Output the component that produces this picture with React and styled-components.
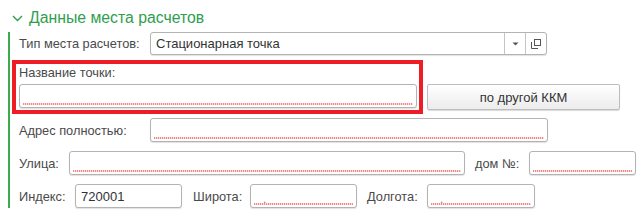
import React from 'react'
import styled, { createGlobalStyle } from 'styled-components'

const GlobalStyle = createGlobalStyle`
    body {
        margin: 0;
        background: #fff;
        font-family: "Liberation Sans", Arial, sans-serif;
    }
`

const Page = styled.div`
    width: 640px;
    height: 221px;
    overflow: hidden;
    background: #fff;
`

const Header = styled.div`
    display: flex;
    align-items: center;
    box-sizing: border-box;
    height: 32px;
    padding: 3px 0 0 12px;
    color: #2f9e4f;
    font-size: 15.8px;

    svg {
        margin-right: 6px;
        margin-top: 1px;
    }
`

const Group = styled.div`
    margin-left: 8px;
    border-left: 2px solid #3daa4f;
    padding-left: 9px;
    display: flex;
    flex-direction: column;
`

const Row = styled.div`
    display: flex;
    align-items: center;
    margin-top: ${p => p.$gap || 0}px;
`

const Label = styled.div`
    width: ${p => p.$w}px;
    margin-left: ${p => p.$ml || 0}px;
    flex-shrink: 0;
    font-size: 12.8px;
    color: #4a4a4a;
    white-space: nowrap;
`

const Field = styled.div`
    position: relative;
    box-sizing: border-box;
    width: ${p => p.$w}px;
    height: ${p => p.$h || 24}px;
    border: 1px solid #b3b3b3;
    border-radius: 3px;
    box-shadow: 0 1px 1px rgba(0, 0, 0, 0.12);
    background: #fff;
    display: flex;
    align-items: center;
    padding-left: 5px;
    font-size: 13px;
    color: #333;
    flex-shrink: 0;

    ${p => p.$required && `
        &::after {
            content: '';
            position: absolute;
            left: 3px;
            right: 3px;
            bottom: 2px;
            height: 2px;
            background: repeating-linear-gradient(90deg, #f38a8a 0 1px, #fddada 1px 2px);
        }
    `}
`

const FieldText = styled.span`
    flex: 1;
`

const Dot = styled.span`
    flex: 1;
    padding-left: 7px;
    padding-top: 6px;
    color: #8a8a8a;
    font-size: 12px;
`

const FieldButton = styled.div`
    width: 20px;
    align-self: stretch;
    border-left: 1px solid #c4c4c4;
    display: flex;
    align-items: center;
    justify-content: center;
`

const Highlight = styled.div`
    margin-left: -7px;
    margin-top: 5px;
    border: 4px solid #ee1c25;
    padding: 0 2px 2px 3px;
    width: 398px;
`

const HighlightLabel = styled(Label)`
    height: 20px;
    line-height: 18px;
`

const NameRow = styled.div`
    display: flex;
    align-items: flex-end;
`

const Button = styled.div`
    box-sizing: border-box;
    margin-left: 4px;
    margin-bottom: 4px;
    width: 193px;
    height: 26px;
    border: 1px solid #bdbdbd;
    border-radius: 2px;
    background: linear-gradient(#ffffff, #ececec);
    box-shadow: 0 1px 1px rgba(0, 0, 0, 0.15);
    display: flex;
    align-items: center;
    justify-content: center;
    font-size: 13px;
    color: #333;
`

const Chevron = () => (
    <svg width="11" height="7" viewBox="0 0 11 7">
        <path d="M1 1l4.5 4.5L10 1" fill="none" stroke="#2f9e4f" strokeWidth="1.4" />
    </svg>
)

const DropIcon = () => (
    <svg width="7" height="4" viewBox="0 0 7 4">
        <path d="M0.5 0.5h6L3.5 3.5z" fill="#555" />
    </svg>
)

const CopyIcon = () => (
    <svg width="10" height="10" viewBox="0 0 10 10">
        <rect x="3.5" y="0.5" width="6" height="6" fill="none" stroke="#555" />
        <path d="M0.5 3v6.5H7" fill="none" stroke="#555" />
    </svg>
)

const App = () => {
    return (
        <Page>
            <GlobalStyle />
            <Header>
                <Chevron />
                Данные места расчетов
            </Header>
            <Group>
                <Row>
                    <Label $w={131}>Тип места расчетов:</Label>
                    <Field $w={397} $h={23}>
                        <FieldText>Стационарная точка</FieldText>
                        <FieldButton><DropIcon /></FieldButton>
                        <FieldButton><CopyIcon /></FieldButton>
                    </Field>
                </Row>
                <NameRow>
                    <Highlight>
                        <HighlightLabel>Название точки:</HighlightLabel>
                        <Field $w={398} $required />
                    </Highlight>
                    <Button>по другой ККМ</Button>
                </NameRow>
                <Row $gap={4}>
                    <Label $w={131}>Адрес полностью:</Label>
                    <Field $w={398} $required />
                </Row>
                <Row $gap={9}>
                    <Label $w={50}>Улица:</Label>
                    <Field $w={396} $required />
                    <Label $w={54} $ml={10}>дом №:</Label>
                    <Field $w={107} $required />
                </Row>
                <Row $gap={9}>
                    <Label $w={56}>Индекс:</Label>
                    <Field $w={107}><FieldText>720001</FieldText></Field>
                    <Label $w={57} $ml={11}>Широта:</Label>
                    <Field $w={107} $required><Dot>.</Dot></Field>
                    <Label $w={60} $ml={10}>Долгота:</Label>
                    <Field $w={108} $required><Dot>.</Dot></Field>
                </Row>
            </Group>
        </Page>
    )
}

export default App
